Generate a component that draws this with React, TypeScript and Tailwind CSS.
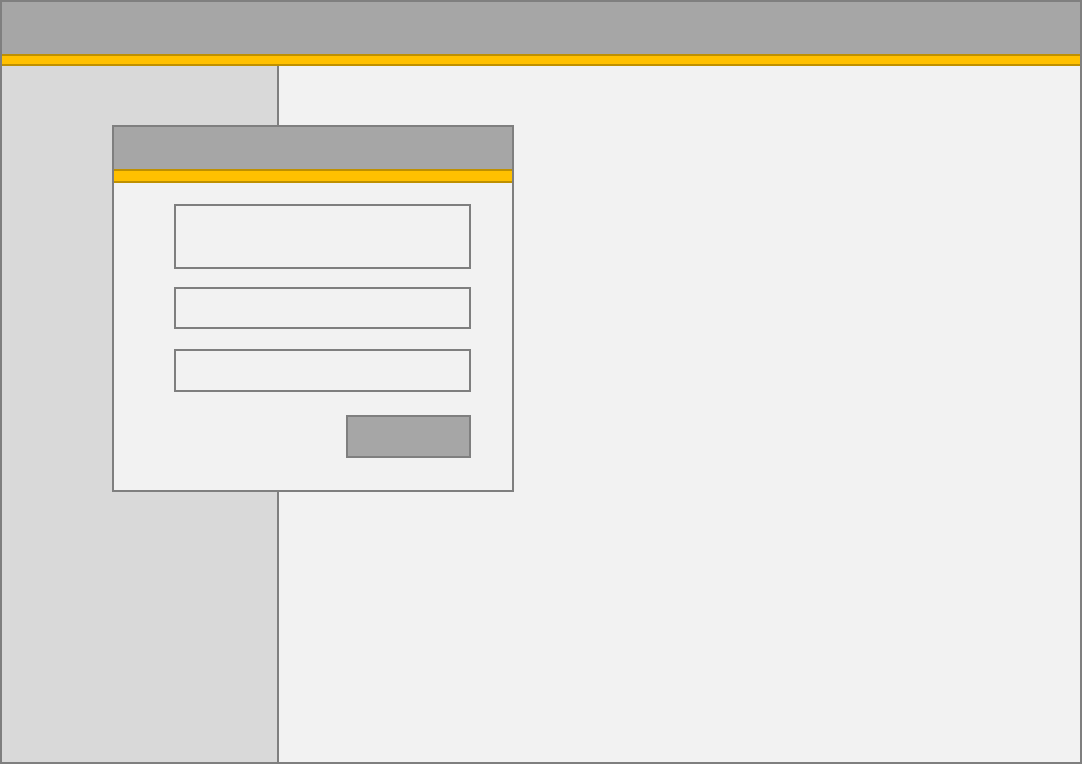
export default function App() {
  return (
    <div className="relative flex h-[764px] w-[1082px] flex-col border-2 border-[#7f7f7f] bg-[#f2f2f2] font-['Liberation_Sans',sans-serif]">
      {/* top bar */}
      <div className="h-[52px] shrink-0 bg-[#a6a6a6]" />
      <div className="h-[12px] shrink-0 border-y-2 border-[#bf9000] bg-[#ffc000]" />

      <div className="flex min-h-0 flex-1">
        <aside className="w-[277px] shrink-0 border-r-2 border-[#7f7f7f] bg-[#d9d9d9]" />
        <main className="flex-1 bg-[#f2f2f2]" />
      </div>

      {/* dialog */}
      <div className="absolute left-[110px] top-[123px] flex h-[367px] w-[402px] flex-col border-2 border-[#7f7f7f] bg-[#f2f2f2]">
        <div className="h-[42px] shrink-0 bg-[#a6a6a6]" />
        <div className="h-[14px] shrink-0 border-y-2 border-[#bf9000] bg-[#ffc000]" />
        <div className="flex flex-col pl-[60px] pt-[21px]">
          <div className="h-[65px] w-[297px] border-2 border-[#7f7f7f] bg-[#f2f2f2]" />
          <div className="mt-[18px] h-[42px] w-[297px] border-2 border-[#7f7f7f] bg-[#f2f2f2]" />
          <div className="mt-[20px] h-[43px] w-[297px] border-2 border-[#7f7f7f] bg-[#f2f2f2]" />
          <div className="mt-[23px] flex w-[297px] justify-end">
            <button type="button" className="h-[43px] w-[125px] border-2 border-[#7f7f7f] bg-[#a6a6a6]" />
          </div>
        </div>
      </div>
    </div>
  );
}
